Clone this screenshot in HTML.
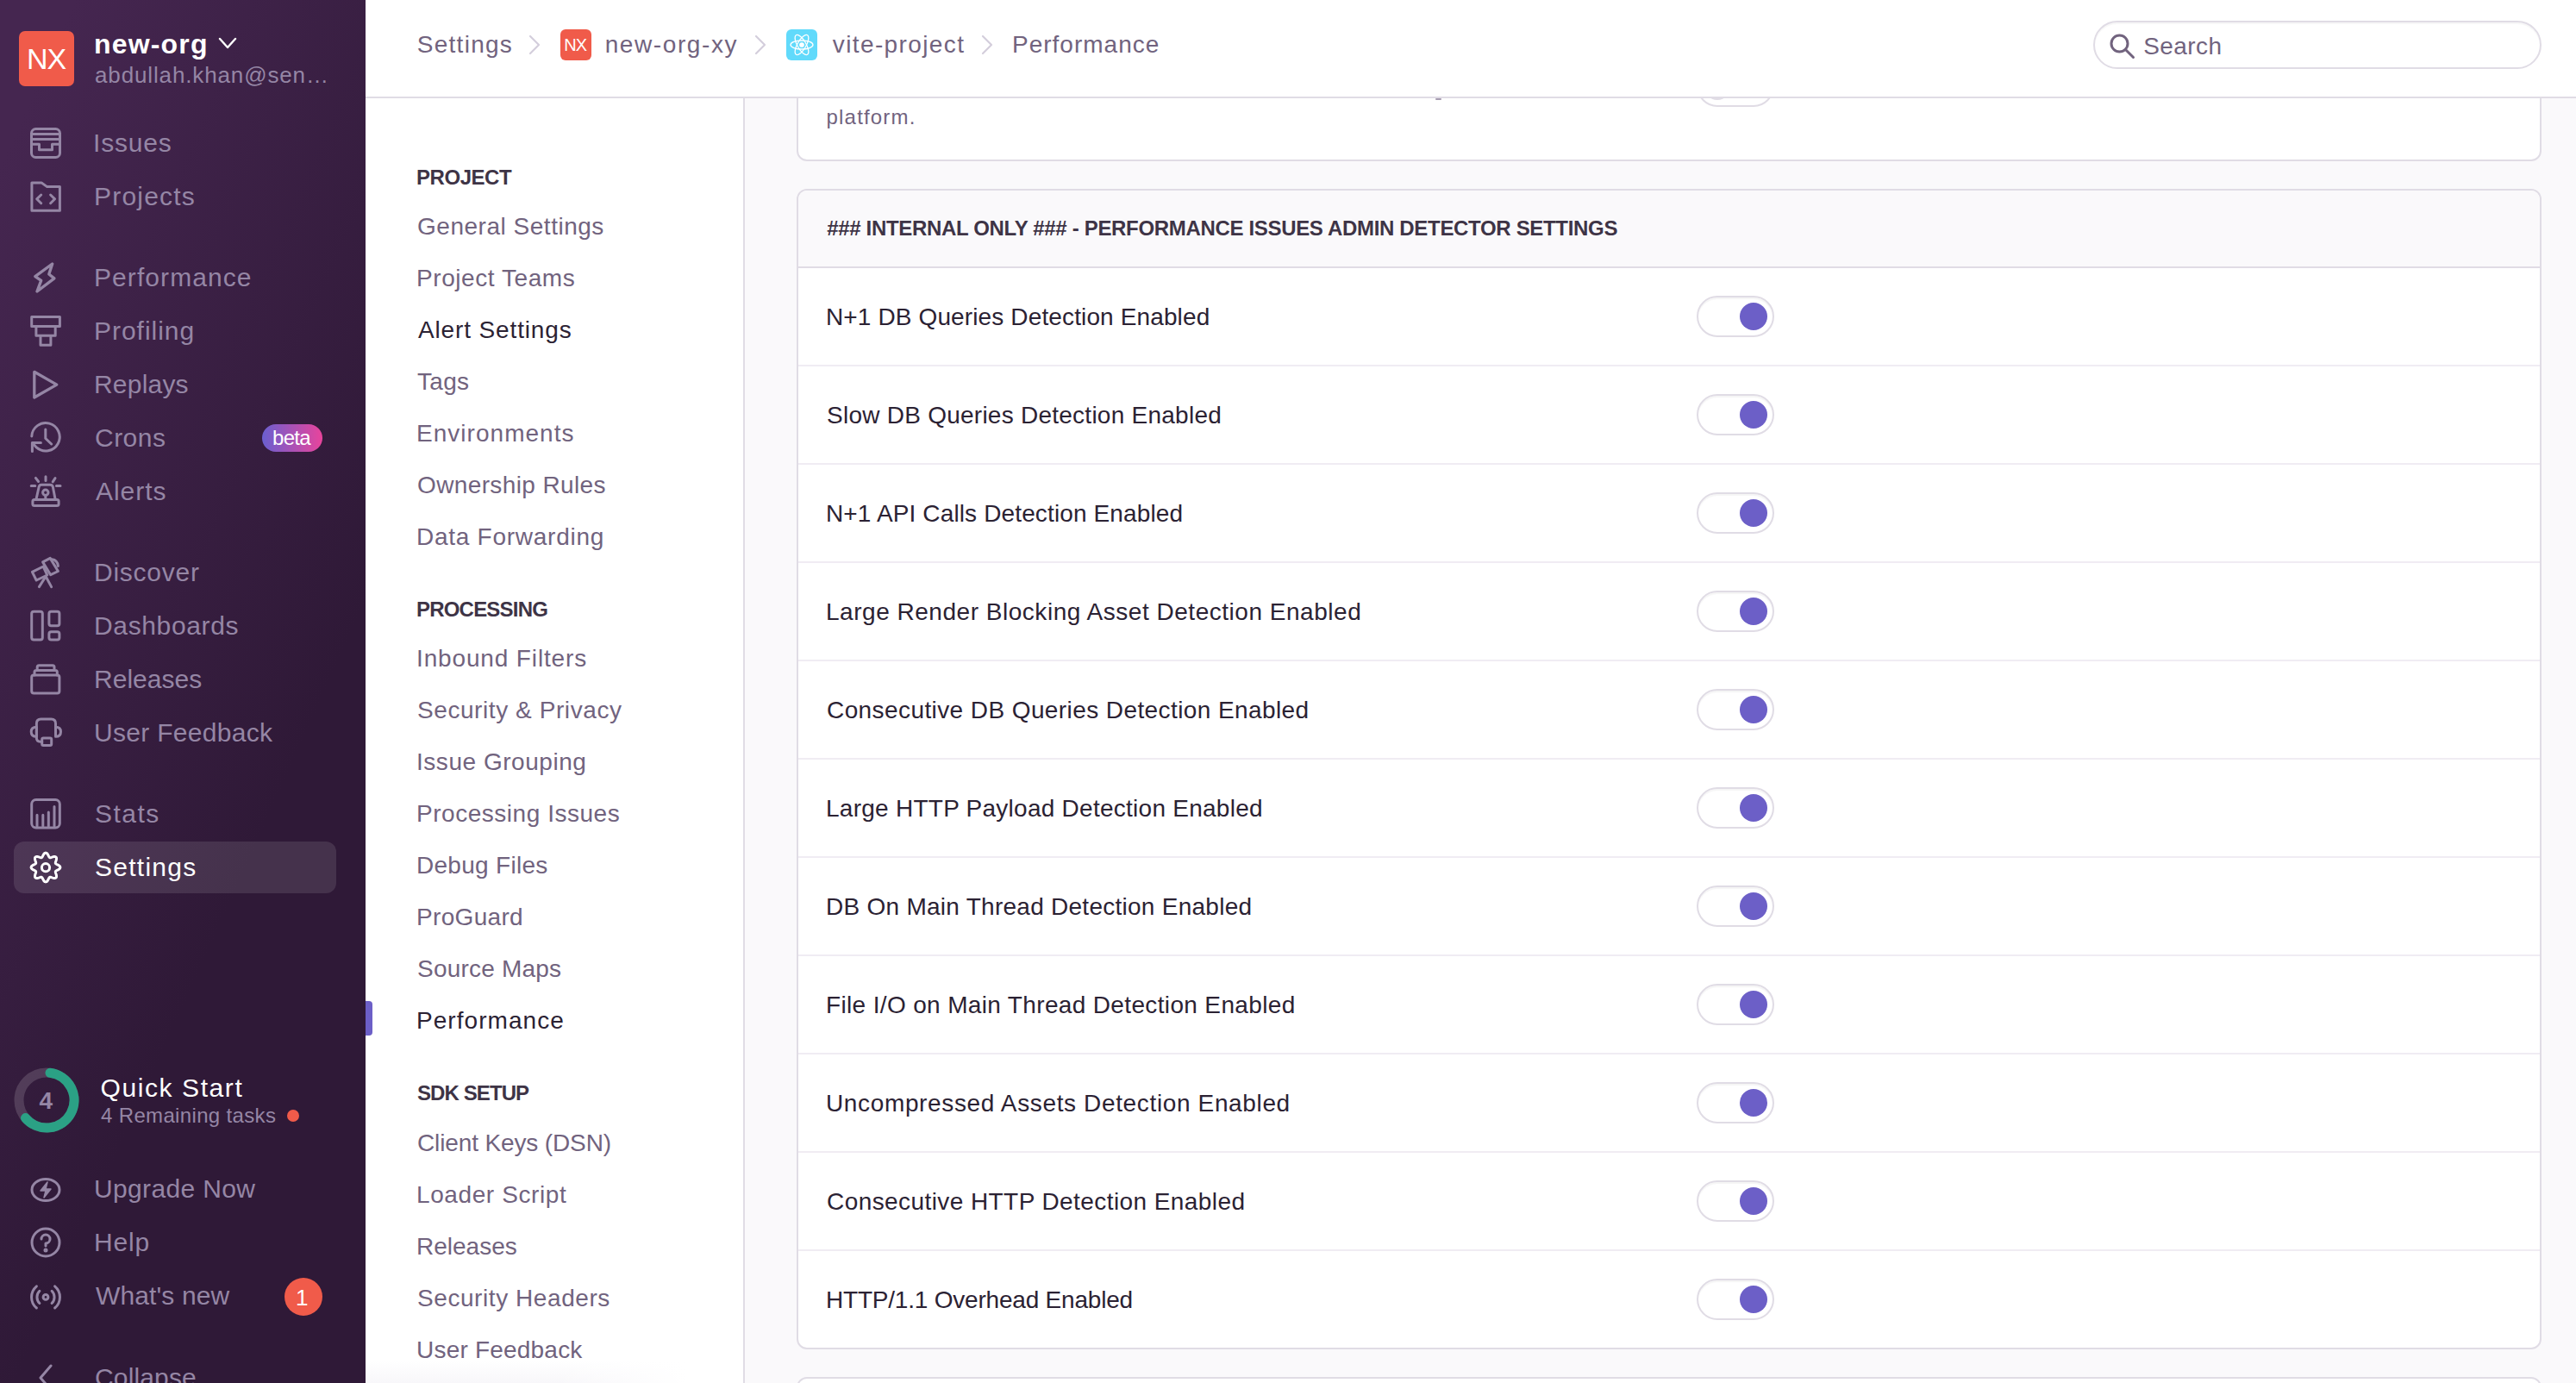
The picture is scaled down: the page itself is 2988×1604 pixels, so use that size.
<!DOCTYPE html>
<html><head><meta charset="utf-8"><style>
html,body{margin:0;padding:0;width:2988px;height:1604px;overflow:hidden;background:#FAF9FB;}
body{position:relative;font-family:"Liberation Sans",sans-serif;}
.a{position:absolute;}
.t{position:absolute;white-space:nowrap;line-height:1;}
svg.a{overflow:visible;}
</style></head><body>
<div class="a" style="left:0px;top:0px;width:424px;height:1604px;background:linear-gradient(294.17deg,#2f1937 35.57%,#452650 92.42%,#452650 92.42%);"></div>
<div class="a" style="left:22px;top:36px;width:64px;height:64px;background:#F05B4A;border-radius:7px;"></div>
<div class="t" style="left:31.00px;top:51.00px;font-size:34px;color:#fff;letter-spacing:-1.000px;">NX</div>
<div class="t" style="left:109.00px;top:35.00px;font-size:32px;color:#fff;font-weight:700;letter-spacing:1.167px;">new-org</div>
<svg class="a" style="left:252px;top:42px" width="24" height="16" viewBox="0 0 24 16"><path d="M3 3 L12 13 L21 3" fill="none" stroke="#fff" stroke-width="2.4" stroke-linecap="round" stroke-linejoin="round"/></svg>
<div class="t" style="left:110.00px;top:73.50px;font-size:26px;color:#9586A5;letter-spacing:0.865px;">abdullah.khan@sen…</div>
<div class="a" style="left:16px;top:976px;width:374px;height:60px;background:rgba(255,255,255,0.11);border-radius:12px;"></div>
<div class="t" style="left:108.00px;top:150.50px;font-size:30px;color:#9586A5;letter-spacing:0.800px;">Issues</div>
<svg class="a" style="left:35px;top:148px" width="36" height="36" viewBox="0 0 36 36" fill="none" stroke="#9586A5" stroke-width="3" stroke-linejoin="round" stroke-linecap="round"><rect x="1.5" y="1.5" width="33" height="33" rx="5"/><path d="M1.5 7.5 H34.5 M1.5 13.4 H34.5 M1.5 19.3 H10.5 V25.7 H25.5 V19.3 H34.5"/></svg>
<div class="t" style="left:109.00px;top:212.50px;font-size:30px;color:#9586A5;letter-spacing:1.200px;">Projects</div>
<svg class="a" style="left:35px;top:210px" width="36" height="36" viewBox="0 0 36 36" fill="none" stroke="#9586A5" stroke-width="3" stroke-linejoin="round" stroke-linecap="round"><path d="M1.9 1.9 H13.1 L19.6 6.6 H34.4 V34.2 H1.9 Z"/><path d="M12.7 16 L7.7 20.8 L12.7 25.7 M23.6 16 L28.6 20.8 L23.6 25.7"/></svg>
<div class="t" style="left:109.00px;top:306.50px;font-size:30px;color:#9586A5;letter-spacing:1.080px;">Performance</div>
<svg class="a" style="left:35px;top:304px" width="36" height="36" viewBox="0 0 36 36" fill="none" stroke="#9586A5" stroke-width="3" stroke-linejoin="round" stroke-linecap="round"><path d="M25.7 2 L5.8 16.6 L12.7 21.3 L8 34 L27.9 18.8 L21.8 14 Z" stroke-width="3.4"/></svg>
<div class="t" style="left:109.00px;top:368.50px;font-size:30px;color:#9586A5;letter-spacing:0.975px;">Profiling</div>
<svg class="a" style="left:35px;top:366px" width="36" height="36" viewBox="0 0 36 36" fill="none" stroke="#9586A5" stroke-width="3" stroke-linejoin="round" stroke-linecap="round"><path d="M1.7 1.5 H34.4 V12.4 H1.7 Z M6.9 12.4 H29.2 V23.2 H6.9 Z M12 23.2 H23.9 V34.2 H12 Z"/></svg>
<div class="t" style="left:109.00px;top:430.50px;font-size:30px;color:#9586A5;letter-spacing:0.200px;">Replays</div>
<svg class="a" style="left:35px;top:428px" width="36" height="36" viewBox="0 0 36 36" fill="none" stroke="#9586A5" stroke-width="3" stroke-linejoin="round" stroke-linecap="round"><path d="M4.8 3.3 L30.8 18.1 L4.8 33 Z" stroke-width="3.3"/></svg>
<div class="t" style="left:110.00px;top:492.50px;font-size:30px;color:#9586A5;letter-spacing:0.475px;">Crons</div>
<svg class="a" style="left:35px;top:490px" width="36" height="36" viewBox="0 0 36 36" fill="none" stroke="#9586A5" stroke-width="3" stroke-linejoin="round" stroke-linecap="round"><path d="M1.8 16 A16.2 16.2 0 1 1 7.3 28.9 L2.6 23.8"/><path d="M2.4 33.4 V23.6 H12.4"/><path d="M17.8 8 V18.5 L24.6 25"/></svg>
<div class="t" style="left:111.00px;top:554.50px;font-size:30px;color:#9586A5;letter-spacing:0.960px;">Alerts</div>
<svg class="a" style="left:35px;top:552px" width="36" height="36" viewBox="0 0 36 36" fill="none" stroke="#9586A5" stroke-width="3" stroke-linejoin="round" stroke-linecap="round"><rect x="2.9" y="27.5" width="30.2" height="6.9" rx="2"/><path d="M6.9 27.5 L10.2 12.5 Q10.8 10.2 13.1 10.2 H23 Q25.6 10.2 26.3 12.5 L29.2 27.5"/><circle cx="17.8" cy="19.2" r="3.2"/><path d="M17.8 22.4 V27.5 M18 0.8 V5.6 M6.4 2.4 L9.6 6.5 M29 2.6 L26.2 6.8 M1.2 11.6 H5.8 M30.4 11.6 H35"/></svg>
<div class="t" style="left:109.00px;top:648.50px;font-size:30px;color:#9586A5;letter-spacing:0.743px;">Discover</div>
<svg class="a" style="left:35px;top:646px" width="36" height="36" viewBox="0 0 36 36" fill="none" stroke="#9586A5" stroke-width="3" stroke-linejoin="round" stroke-linecap="round"><path d="M2.4 17.4 L15.2 11 L19.8 21 L7.2 27 Z"/><path d="M14.6 5.9 L23.2 1.4 L32.4 16.5 L23.7 20.7 Z"/><path d="M25.3 2.8 Q31.5 3.5 32.4 10.5"/><path d="M18.1 22.5 L10.4 34.6 M18.1 22.5 L24.6 34.6"/></svg>
<div class="t" style="left:109.00px;top:710.50px;font-size:30px;color:#9586A5;letter-spacing:0.644px;">Dashboards</div>
<svg class="a" style="left:35px;top:708px" width="36" height="36" viewBox="0 0 36 36" fill="none" stroke="#9586A5" stroke-width="3" stroke-linejoin="round" stroke-linecap="round"><rect x="1.7" y="1.3" width="12.6" height="32.8" rx="2.5"/><rect x="21.9" y="1.3" width="12" height="16.5" rx="2.5"/><rect x="21.9" y="24.8" width="12" height="9.3" rx="2.5"/></svg>
<div class="t" style="left:109.00px;top:772.50px;font-size:30px;color:#9586A5;letter-spacing:0.029px;">Releases</div>
<svg class="a" style="left:35px;top:770px" width="36" height="36" viewBox="0 0 36 36" fill="none" stroke="#9586A5" stroke-width="3" stroke-linejoin="round" stroke-linecap="round"><rect x="1.7" y="12.9" width="32.2" height="21.1" rx="2.5"/><path d="M5 12.9 V9.6 Q5 7.6 7 7.6 H29.3 Q31.3 7.6 31.3 9.6 V12.9 M8.2 7.6 V3.8 Q8.2 1.8 10.2 1.8 H26 Q28 1.8 28 3.8 V7.6"/></svg>
<div class="t" style="left:109.00px;top:834.50px;font-size:30px;color:#9586A5;letter-spacing:0.292px;">User Feedback</div>
<svg class="a" style="left:35px;top:832px" width="36" height="36" viewBox="0 0 36 36" fill="none" stroke="#9586A5" stroke-width="3" stroke-linejoin="round" stroke-linecap="round"><path d="M7.4 20 V7 Q7.4 2 12.4 2 H24.5 Q29.5 2 29.5 7 V20"/><path d="M7.4 11.2 Q1.2 11.2 1.2 16.7 Q1.2 22.3 7.4 22.3 Z M29.5 11.2 Q35.5 11.2 35.5 16.7 Q35.5 22.3 29.5 22.3 Z"/><path d="M7.4 20 V24 Q7.4 28.2 12 28.2 H13.7"/><rect x="13.7" y="24.1" width="11" height="8.4" rx="1.5"/></svg>
<div class="t" style="left:110.00px;top:928.50px;font-size:30px;color:#9586A5;letter-spacing:1.475px;">Stats</div>
<svg class="a" style="left:35px;top:926px" width="36" height="36" viewBox="0 0 36 36" fill="none" stroke="#9586A5" stroke-width="3" stroke-linejoin="round" stroke-linecap="round"><rect x="1.7" y="1.5" width="32.6" height="32.5" rx="5"/><path d="M8 32.2 V19.2 M14.8 32.2 V19.2 M21.3 32.2 V16.1 M28 32.2 V9.6"/></svg>
<div class="t" style="left:110.00px;top:990.50px;font-size:30px;color:#fff;letter-spacing:1.257px;">Settings</div>
<svg class="a" style="left:35px;top:988px" width="36" height="36" viewBox="0 0 36 36" fill="none" stroke="#fff" stroke-width="3" stroke-linejoin="round" stroke-linecap="round"><circle cx="18" cy="18.2" r="4.6"/><path d="M18.00 1.10 L19.09 1.44 L20.06 2.38 L20.85 3.68 L21.48 5.01 L22.05 6.06 L22.71 6.64 L23.58 6.69 L24.72 6.35 L26.11 5.86 L27.59 5.50 L28.94 5.53 L29.95 6.05 L30.47 7.06 L30.50 8.41 L30.14 9.89 L29.65 11.27 L29.31 12.42 L29.36 13.29 L29.94 13.95 L30.99 14.52 L32.32 15.15 L33.62 15.94 L34.56 16.91 L34.90 18.00 L34.56 19.09 L33.62 20.06 L32.32 20.85 L30.99 21.48 L29.94 22.05 L29.36 22.71 L29.31 23.58 L29.65 24.72 L30.14 26.11 L30.50 27.59 L30.47 28.94 L29.95 29.95 L28.94 30.47 L27.59 30.50 L26.11 30.14 L24.72 29.65 L23.58 29.31 L22.71 29.36 L22.05 29.94 L21.48 30.99 L20.85 32.32 L20.06 33.62 L19.09 34.56 L18.00 34.90 L16.91 34.56 L15.94 33.62 L15.15 32.32 L14.52 30.99 L13.95 29.94 L13.29 29.36 L12.42 29.31 L11.28 29.65 L9.89 30.14 L8.41 30.50 L7.06 30.47 L6.05 29.95 L5.53 28.94 L5.50 27.59 L5.86 26.11 L6.35 24.73 L6.69 23.58 L6.64 22.71 L6.06 22.05 L5.01 21.48 L3.68 20.85 L2.38 20.06 L1.44 19.09 L1.10 18.00 L1.44 16.91 L2.38 15.94 L3.68 15.15 L5.01 14.52 L6.06 13.95 L6.64 13.29 L6.69 12.42 L6.35 11.27 L5.86 9.89 L5.50 8.41 L5.53 7.06 L6.05 6.05 L7.06 5.53 L8.41 5.50 L9.89 5.86 L11.27 6.35 L12.42 6.69 L13.29 6.64 L13.95 6.06 L14.52 5.01 L15.15 3.68 L15.94 2.38 L16.91 1.44 Z"/></svg>
<div class="a" style="left:304px;top:492px;width:70px;height:32px;background:linear-gradient(90deg,#6A5FCF,#E8449C);border-radius:16px;"></div>
<div class="t" style="left:316.00px;top:495.50px;font-size:24px;color:#fff;letter-spacing:-0.667px;">beta</div>
<svg class="a" style="left:14px;top:1236px" width="80" height="80" viewBox="0 0 80 80">
<circle cx="40" cy="40" r="32" fill="none" stroke="rgba(255,255,255,0.15)" stroke-width="11"/>
<path d="M 44 8.3 A 32 32 0 1 1 15.5 60.6" fill="none" stroke="#2BA185" stroke-width="11" stroke-linecap="round"/>
</svg>
<div class="t" style="left:45.60px;top:1262.50px;font-size:28px;color:#9586A5;font-weight:700;">4</div>
<div class="t" style="left:116.60px;top:1246.50px;font-size:30px;color:#fff;letter-spacing:1.580px;">Quick Start</div>
<div class="t" style="left:117.00px;top:1281.50px;font-size:24px;color:#9586A5;letter-spacing:0.344px;">4 Remaining tasks</div>
<div class="a" style="left:333px;top:1287px;width:14px;height:14px;background:#F05B4A;border-radius:50%;"></div>
<div class="t" style="left:109.00px;top:1364.00px;font-size:30px;color:#9586A5;letter-spacing:0.340px;">Upgrade Now</div>
<svg class="a" style="left:35px;top:1361.5px" width="36" height="36" viewBox="0 0 36 36" fill="none" stroke="#9586A5" stroke-width="3" stroke-linejoin="round" stroke-linecap="round"><ellipse cx="18" cy="18" rx="16" ry="12.5"/><path d="M20 9 L12 19 H18 L16 27 L24 17 H18 Z" fill="#9586A5" stroke-width="1.5"/></svg>
<div class="t" style="left:109.00px;top:1425.50px;font-size:30px;color:#9586A5;letter-spacing:0.800px;">Help</div>
<svg class="a" style="left:35px;top:1423px" width="36" height="36" viewBox="0 0 36 36" fill="none" stroke="#9586A5" stroke-width="3" stroke-linejoin="round" stroke-linecap="round"><circle cx="18" cy="18" r="16"/><path d="M13 14 A5 5 0 1 1 18 19 V22"/><circle cx="18" cy="27" r="1" fill="#9586A5"/></svg>
<div class="t" style="left:111.00px;top:1487.50px;font-size:30px;color:#9586A5;letter-spacing:0.122px;">What&#x27;s new</div>
<svg class="a" style="left:35px;top:1485px" width="36" height="36" viewBox="0 0 36 36" fill="none" stroke="#9586A5" stroke-width="3" stroke-linejoin="round" stroke-linecap="round"><circle cx="18" cy="19.4" r="2.9"/><path d="M10.9 12.3 A10 10 0 0 0 10.9 26.5 M25.1 12.3 A10 10 0 0 1 25.1 26.5 M7.4 6.8 A16.5 16.5 0 0 0 7.4 32 M28.6 6.8 A16.5 16.5 0 0 1 28.6 32"/></svg>
<div class="t" style="left:110.00px;top:1582.50px;font-size:30px;color:#9586A5;letter-spacing:0.143px;">Collapse</div>
<svg class="a" style="left:35px;top:1580px" width="36" height="36" viewBox="0 0 36 36" fill="none" stroke="#9586A5" stroke-width="3" stroke-linejoin="round" stroke-linecap="round"><path d="M24 4 L12 18 L24 32"/></svg>
<div class="a" style="left:330px;top:1482px;width:44px;height:44px;background:#F05B4A;border-radius:50%;"></div>
<div class="t" style="left:343.00px;top:1492.00px;font-size:26px;color:#fff;">1</div>
<div class="a" style="left:424px;top:114px;width:438px;height:1490px;background:#fff;"></div>
<div class="a" style="left:862px;top:114px;width:2px;height:1490px;background:#E0DCE5;"></div>
<div class="t" style="left:483.00px;top:193.50px;font-size:24px;color:#3E3446;font-weight:700;letter-spacing:-0.450px;">PROJECT</div>
<div class="t" style="left:484.00px;top:248.50px;font-size:28px;color:#71637E;letter-spacing:0.520px;">General Settings</div>
<div class="t" style="left:483.00px;top:308.50px;font-size:28px;color:#71637E;letter-spacing:0.567px;">Project Teams</div>
<div class="t" style="left:485.00px;top:368.50px;font-size:28px;color:#2B2233;letter-spacing:0.862px;">Alert Settings</div>
<div class="t" style="left:484.00px;top:428.50px;font-size:28px;color:#71637E;letter-spacing:0.300px;">Tags</div>
<div class="t" style="left:483.00px;top:488.50px;font-size:28px;color:#71637E;letter-spacing:1.027px;">Environments</div>
<div class="t" style="left:484.00px;top:548.50px;font-size:28px;color:#71637E;letter-spacing:0.379px;">Ownership Rules</div>
<div class="t" style="left:483.00px;top:608.50px;font-size:28px;color:#71637E;letter-spacing:0.736px;">Data Forwarding</div>
<div class="t" style="left:483.00px;top:694.50px;font-size:24px;color:#3E3446;font-weight:700;letter-spacing:-0.800px;">PROCESSING</div>
<div class="t" style="left:483.00px;top:749.50px;font-size:28px;color:#71637E;letter-spacing:0.857px;">Inbound Filters</div>
<div class="t" style="left:484.00px;top:809.50px;font-size:28px;color:#71637E;letter-spacing:0.576px;">Security &amp; Privacy</div>
<div class="t" style="left:483.00px;top:869.50px;font-size:28px;color:#71637E;letter-spacing:0.538px;">Issue Grouping</div>
<div class="t" style="left:483.00px;top:929.50px;font-size:28px;color:#71637E;letter-spacing:0.531px;">Processing Issues</div>
<div class="t" style="left:483.00px;top:989.50px;font-size:28px;color:#71637E;letter-spacing:0.290px;">Debug Files</div>
<div class="t" style="left:483.00px;top:1049.50px;font-size:28px;color:#71637E;letter-spacing:0.329px;">ProGuard</div>
<div class="t" style="left:484.00px;top:1109.50px;font-size:28px;color:#71637E;letter-spacing:0.210px;">Source Maps</div>
<div class="t" style="left:483.00px;top:1169.50px;font-size:28px;color:#2B2233;letter-spacing:1.050px;">Performance</div>
<div class="t" style="left:484.00px;top:1256.00px;font-size:24px;color:#3E3446;font-weight:700;letter-spacing:-0.912px;">SDK SETUP</div>
<div class="t" style="left:484.00px;top:1311.50px;font-size:28px;color:#71637E;letter-spacing:-0.131px;">Client Keys (DSN)</div>
<div class="t" style="left:483.00px;top:1371.50px;font-size:28px;color:#71637E;letter-spacing:0.600px;">Loader Script</div>
<div class="t" style="left:483.00px;top:1431.50px;font-size:28px;color:#71637E;">Releases</div>
<div class="t" style="left:484.00px;top:1491.50px;font-size:28px;color:#71637E;letter-spacing:0.573px;">Security Headers</div>
<div class="t" style="left:483.00px;top:1551.50px;font-size:28px;color:#71637E;letter-spacing:0.208px;">User Feedback</div>
<div class="a" style="left:424px;top:1578px;width:438px;height:26px;background:linear-gradient(to right,rgba(255,255,255,0) 0%,rgba(255,255,255,0) 50%,#fff 85%),linear-gradient(rgba(248,247,250,0),#F8F7FA);"></div>
<div class="a" style="left:424px;top:1161px;width:8px;height:40px;background:#6C5FC7;border-radius:0 4px 4px 0;"></div>
<div class="a" style="left:864px;top:114px;width:2124px;height:1490px;background:#FAF9FB;"></div>
<div class="a" style="left:924px;top:60px;width:2024px;height:127px;background:#fff;border:2px solid #E0DCE5;border-radius:12px;box-sizing:border-box;"></div>
<div class="t" style="left:958.60px;top:123.50px;font-size:24px;color:#71637E;letter-spacing:1.175px;">platform.</div>
<div class="a" style="left:1968px;top:76px;width:90px;height:48px;background:#fff;border:2px solid #E0DCE5;border-radius:24px;box-sizing:border-box;"></div>
<div class="a" style="left:1976px;top:84px;width:32px;height:32px;background:#E0DCE5;border-radius:50%;"></div>
<div class="a" style="left:924px;top:219px;width:2024px;height:1346px;background:#fff;border:2px solid #E0DCE5;border-radius:12px;box-sizing:border-box;overflow:hidden;"></div>
<div class="a" style="left:926px;top:221px;width:2020px;height:88px;background:#FAF9FB;border-radius:10px 10px 0 0;"></div>
<div class="a" style="left:926px;top:309px;width:2020px;height:2px;background:#E0DCE5;"></div>
<div class="t" style="left:959.20px;top:252.50px;font-size:24px;color:#3E3446;font-weight:700;letter-spacing:-0.326px;">### INTERNAL ONLY ### - PERFORMANCE ISSUES ADMIN DETECTOR SETTINGS</div>
<div class="t" style="left:958.00px;top:353.50px;font-size:28px;color:#2B2233;letter-spacing:0.129px;">N+1 DB Queries Detection Enabled</div>
<div class="a" style="left:1968px;top:343px;width:90px;height:48px;background:#fff;border:2px solid #E0DCE5;border-radius:24px;box-sizing:border-box;box-shadow:inset 0 2px 1px rgba(0,0,0,0.04);"></div>
<div class="a" style="left:2018px;top:351px;width:32px;height:32px;background:#6C5FC7;border-radius:50%;"></div>
<div class="a" style="left:926px;top:423px;width:2020px;height:2px;background:#F0ECF3;"></div>
<div class="t" style="left:959.00px;top:467.50px;font-size:28px;color:#2B2233;letter-spacing:0.250px;">Slow DB Queries Detection Enabled</div>
<div class="a" style="left:1968px;top:457px;width:90px;height:48px;background:#fff;border:2px solid #E0DCE5;border-radius:24px;box-sizing:border-box;box-shadow:inset 0 2px 1px rgba(0,0,0,0.04);"></div>
<div class="a" style="left:2018px;top:465px;width:32px;height:32px;background:#6C5FC7;border-radius:50%;"></div>
<div class="a" style="left:926px;top:537px;width:2020px;height:2px;background:#F0ECF3;"></div>
<div class="t" style="left:958.00px;top:581.50px;font-size:28px;color:#2B2233;letter-spacing:0.133px;">N+1 API Calls Detection Enabled</div>
<div class="a" style="left:1968px;top:571px;width:90px;height:48px;background:#fff;border:2px solid #E0DCE5;border-radius:24px;box-sizing:border-box;box-shadow:inset 0 2px 1px rgba(0,0,0,0.04);"></div>
<div class="a" style="left:2018px;top:579px;width:32px;height:32px;background:#6C5FC7;border-radius:50%;"></div>
<div class="a" style="left:926px;top:651px;width:2020px;height:2px;background:#F0ECF3;"></div>
<div class="t" style="left:958.00px;top:695.50px;font-size:28px;color:#2B2233;letter-spacing:0.523px;">Large Render Blocking Asset Detection Enabled</div>
<div class="a" style="left:1968px;top:685px;width:90px;height:48px;background:#fff;border:2px solid #E0DCE5;border-radius:24px;box-sizing:border-box;box-shadow:inset 0 2px 1px rgba(0,0,0,0.04);"></div>
<div class="a" style="left:2018px;top:693px;width:32px;height:32px;background:#6C5FC7;border-radius:50%;"></div>
<div class="a" style="left:926px;top:765px;width:2020px;height:2px;background:#F0ECF3;"></div>
<div class="t" style="left:959.00px;top:809.50px;font-size:28px;color:#2B2233;letter-spacing:0.410px;">Consecutive DB Queries Detection Enabled</div>
<div class="a" style="left:1968px;top:799px;width:90px;height:48px;background:#fff;border:2px solid #E0DCE5;border-radius:24px;box-sizing:border-box;box-shadow:inset 0 2px 1px rgba(0,0,0,0.04);"></div>
<div class="a" style="left:2018px;top:807px;width:32px;height:32px;background:#6C5FC7;border-radius:50%;"></div>
<div class="a" style="left:926px;top:879px;width:2020px;height:2px;background:#F0ECF3;"></div>
<div class="t" style="left:958.00px;top:923.50px;font-size:28px;color:#2B2233;letter-spacing:0.257px;">Large HTTP Payload Detection Enabled</div>
<div class="a" style="left:1968px;top:913px;width:90px;height:48px;background:#fff;border:2px solid #E0DCE5;border-radius:24px;box-sizing:border-box;box-shadow:inset 0 2px 1px rgba(0,0,0,0.04);"></div>
<div class="a" style="left:2018px;top:921px;width:32px;height:32px;background:#6C5FC7;border-radius:50%;"></div>
<div class="a" style="left:926px;top:993px;width:2020px;height:2px;background:#F0ECF3;"></div>
<div class="t" style="left:958.00px;top:1037.50px;font-size:28px;color:#2B2233;letter-spacing:0.265px;">DB On Main Thread Detection Enabled</div>
<div class="a" style="left:1968px;top:1027px;width:90px;height:48px;background:#fff;border:2px solid #E0DCE5;border-radius:24px;box-sizing:border-box;box-shadow:inset 0 2px 1px rgba(0,0,0,0.04);"></div>
<div class="a" style="left:2018px;top:1035px;width:32px;height:32px;background:#6C5FC7;border-radius:50%;"></div>
<div class="a" style="left:926px;top:1107px;width:2020px;height:2px;background:#F0ECF3;"></div>
<div class="t" style="left:958.00px;top:1151.50px;font-size:28px;color:#2B2233;letter-spacing:0.350px;">File I/O on Main Thread Detection Enabled</div>
<div class="a" style="left:1968px;top:1141px;width:90px;height:48px;background:#fff;border:2px solid #E0DCE5;border-radius:24px;box-sizing:border-box;box-shadow:inset 0 2px 1px rgba(0,0,0,0.04);"></div>
<div class="a" style="left:2018px;top:1149px;width:32px;height:32px;background:#6C5FC7;border-radius:50%;"></div>
<div class="a" style="left:926px;top:1221px;width:2020px;height:2px;background:#F0ECF3;"></div>
<div class="t" style="left:958.00px;top:1265.50px;font-size:28px;color:#2B2233;letter-spacing:0.639px;">Uncompressed Assets Detection Enabled</div>
<div class="a" style="left:1968px;top:1255px;width:90px;height:48px;background:#fff;border:2px solid #E0DCE5;border-radius:24px;box-sizing:border-box;box-shadow:inset 0 2px 1px rgba(0,0,0,0.04);"></div>
<div class="a" style="left:2018px;top:1263px;width:32px;height:32px;background:#6C5FC7;border-radius:50%;"></div>
<div class="a" style="left:926px;top:1335px;width:2020px;height:2px;background:#F0ECF3;"></div>
<div class="t" style="left:959.00px;top:1379.50px;font-size:28px;color:#2B2233;letter-spacing:0.424px;">Consecutive HTTP Detection Enabled</div>
<div class="a" style="left:1968px;top:1369px;width:90px;height:48px;background:#fff;border:2px solid #E0DCE5;border-radius:24px;box-sizing:border-box;box-shadow:inset 0 2px 1px rgba(0,0,0,0.04);"></div>
<div class="a" style="left:2018px;top:1377px;width:32px;height:32px;background:#6C5FC7;border-radius:50%;"></div>
<div class="a" style="left:926px;top:1449px;width:2020px;height:2px;background:#F0ECF3;"></div>
<div class="t" style="left:958.00px;top:1493.50px;font-size:28px;color:#2B2233;letter-spacing:-0.208px;">HTTP/1.1 Overhead Enabled</div>
<div class="a" style="left:1968px;top:1483px;width:90px;height:48px;background:#fff;border:2px solid #E0DCE5;border-radius:24px;box-sizing:border-box;box-shadow:inset 0 2px 1px rgba(0,0,0,0.04);"></div>
<div class="a" style="left:2018px;top:1491px;width:32px;height:32px;background:#6C5FC7;border-radius:50%;"></div>
<div class="a" style="left:924px;top:1597px;width:2024px;height:40px;background:#fff;border:2px solid #E0DCE5;border-radius:12px;box-sizing:border-box;"></div>
<div class="a" style="left:1665px;top:114px;width:7px;height:2px;background:#A79DB2;border-radius:1px;"></div>
<div class="a" style="left:424px;top:0px;width:2564px;height:112px;background:#fff;z-index:5;"></div>
<div class="a" style="left:424px;top:112px;width:2564px;height:2px;background:#E0DCE5;z-index:5;"></div>
<div class="t" style="left:483.70px;top:37.50px;font-size:28px;color:#71637E;letter-spacing:1.286px;z-index:6;">Settings</div>
<svg class="a" style="left:613px;top:40px;z-index:6" width="14" height="24" viewBox="0 0 14 24"><path d="M2 2 L12 12 L2 22" fill="none" stroke="#D4CEDC" stroke-width="2.2" stroke-linecap="round" stroke-linejoin="round"/></svg>
<div class="a" style="left:650px;top:34px;width:36px;height:36px;background:#F05B4A;border-radius:6px;z-index:6;"></div>
<div class="t" style="left:654.30px;top:42.00px;font-size:20px;color:#fff;letter-spacing:-0.900px;z-index:6;">NX</div>
<div class="t" style="left:701.70px;top:37.50px;font-size:28px;color:#71637E;letter-spacing:1.589px;z-index:6;">new-org-xy</div>
<svg class="a" style="left:875px;top:40px;z-index:6" width="14" height="24" viewBox="0 0 14 24"><path d="M2 2 L12 12 L2 22" fill="none" stroke="#D4CEDC" stroke-width="2.2" stroke-linecap="round" stroke-linejoin="round"/></svg>
<div class="a" style="left:912px;top:34px;width:36px;height:36px;background:#61DAFB;border-radius:6px;z-index:6;"></div>
<svg class="a" style="left:912px;top:34px;z-index:7" width="36" height="36" viewBox="0 0 36 36" fill="none" stroke="#fff" stroke-width="1.3">
<ellipse cx="18" cy="18" rx="13" ry="5"/><ellipse cx="18" cy="18" rx="13" ry="5" transform="rotate(60 18 18)"/><ellipse cx="18" cy="18" rx="13" ry="5" transform="rotate(120 18 18)"/><circle cx="18" cy="18" r="2.2" fill="#fff"/></svg>
<div class="t" style="left:965.80px;top:37.50px;font-size:28px;color:#71637E;letter-spacing:1.382px;z-index:6;">vite-project</div>
<svg class="a" style="left:1138px;top:40px;z-index:6" width="14" height="24" viewBox="0 0 14 24"><path d="M2 2 L12 12 L2 22" fill="none" stroke="#D4CEDC" stroke-width="2.2" stroke-linecap="round" stroke-linejoin="round"/></svg>
<div class="t" style="left:1174.00px;top:37.50px;font-size:28px;color:#71637E;letter-spacing:1.000px;z-index:6;">Performance</div>
<div class="a" style="left:2428px;top:24px;width:520px;height:56px;background:#fff;border:2px solid #E0DCE5;border-radius:28px;box-sizing:border-box;box-shadow:inset 0 2px 0 rgba(0,0,0,0.03);z-index:6;"></div>
<svg class="a" style="left:2446px;top:38px;z-index:7" width="32" height="32" viewBox="0 0 32 32" fill="none" stroke="#71637E" stroke-width="3" stroke-linecap="round"><circle cx="12.5" cy="12.5" r="9.5"/><path d="M19.5 19.5 L28.5 28.5"/></svg>
<div class="t" style="left:2486.20px;top:39.50px;font-size:28px;color:#71637E;letter-spacing:0.440px;z-index:7;">Search</div>
</body></html>
